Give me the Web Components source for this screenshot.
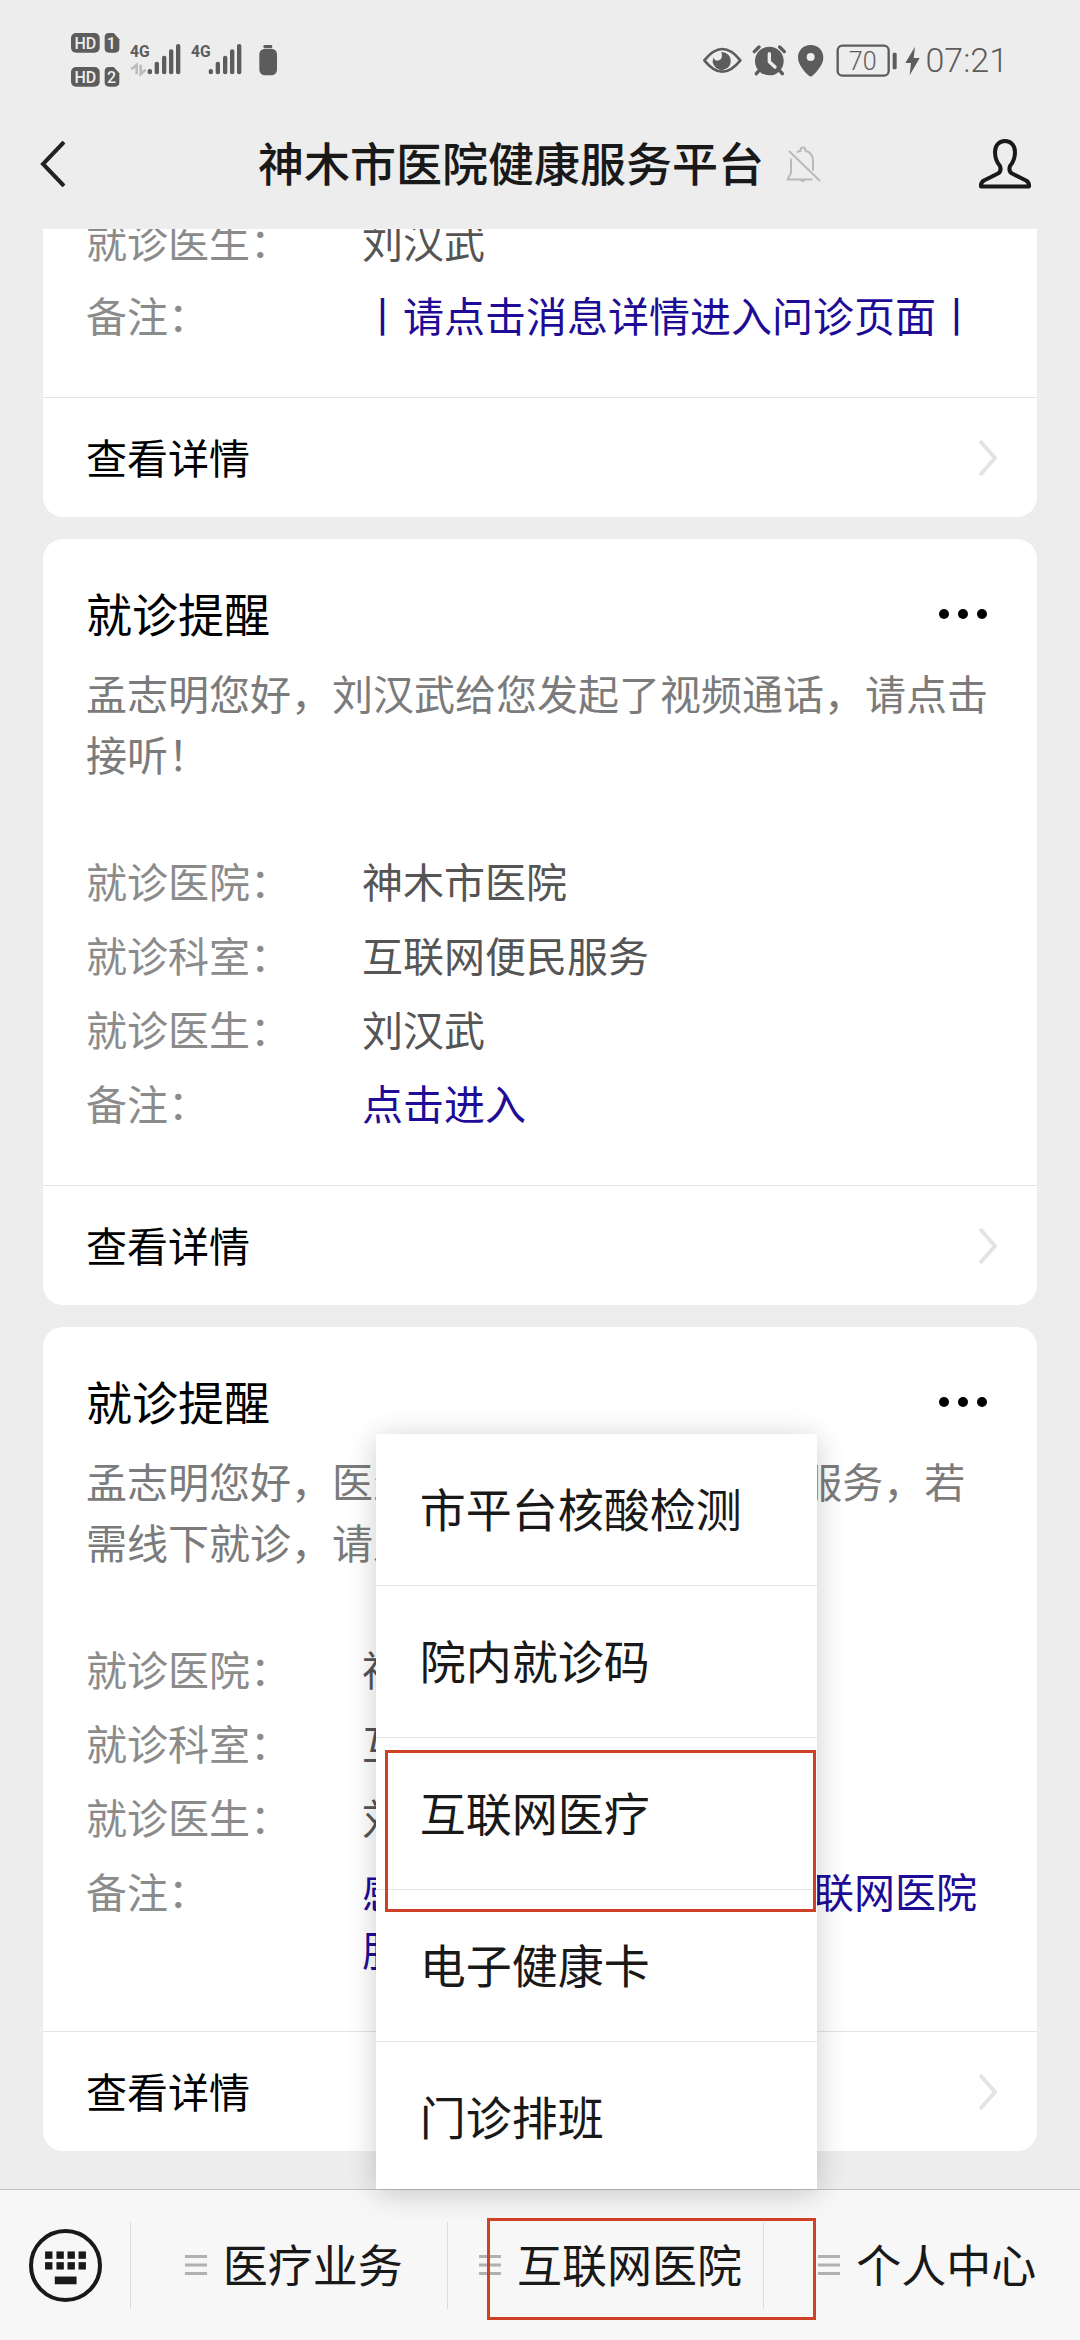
<!DOCTYPE html>
<html lang="zh-CN">
<head>
<meta charset="utf-8">
<meta name="viewport" content="width=device-width, initial-scale=1">
<title>神木市医院健康服务平台</title>
<style>
  html, body { margin: 0; height: 100%; }
  body {
    font-family: "Noto Sans CJK SC", "Noto Sans", sans-serif;
    background: #ededee;
    color: #191919;
  }
</style>
</head>
<body>
<chat-page>
  <status-bar slot="top" time="07:21"></status-bar>
  <nav-bar slot="top">神木市医院健康服务平台</nav-bar>

  <notice-card>
    <info-row label="就诊医生：">刘汉武</info-row>
    <info-row label="备注：" href="#visit">丨请点击消息详情进入问诊页面丨</info-row>
  </notice-card>
  <notice-card heading="就诊提醒">
    <span slot="message">孟志明您好，刘汉武给您发起了视频通话，请点击接听！</span>
    <info-row label="就诊医院：">神木市医院</info-row>
    <info-row label="就诊科室：">互联网便民服务</info-row>
    <info-row label="就诊医生：">刘汉武</info-row>
    <info-row label="备注：" href="#enter">点击进入</info-row>
  </notice-card>
  <notice-card heading="就诊提醒">
    <span slot="message">孟志明您好，医生 刘汉武 已为您开通了服务，若需线下就诊，请及时前往医院。</span>
    <info-row label="就诊医院：">神木市医院</info-row>
    <info-row label="就诊科室：">互联网便民服务</info-row>
    <info-row label="就诊医生：">刘汉武</info-row>
    <info-row label="备注：" href="#thanks">感谢您使用神木市医院互联网医院服务</info-row>
  </notice-card>

  <tool-bar slot="bottom">
    <tool-tab label="医疗业务"></tool-tab>
    <tool-tab label="互联网医院" marked>
      <pop-menu slot="menu">
        <menu-entry>市平台核酸检测</menu-entry>
        <menu-entry>院内就诊码</menu-entry>
        <menu-entry marked>互联网医疗</menu-entry>
        <menu-entry>电子健康卡</menu-entry>
        <menu-entry>门诊排班</menu-entry>
      </pop-menu>
    </tool-tab>
    <tool-tab label="个人中心"></tool-tab>
  </tool-bar>
</chat-page>

<script>
const reset = `
  :host, *, *::before, *::after { box-sizing: border-box; }
  button { margin: 0; padding: 0; border: 0; background: none; font: inherit; color: inherit; text-align: left; cursor: pointer; }
  a { color: inherit; text-decoration: none; }
  svg { display: block; flex: none; }
`;

function define(name, render) {
  customElements.define(name, class extends HTMLElement {
    constructor() {
      super();
      this.attachShadow({ mode: 'open' });
    }
    connectedCallback() {
      const t = document.createElement('template');
      t.innerHTML = `<style>${reset}</style>` + render(this);
      this.shadowRoot.replaceChildren(t.content.cloneNode(true));
    }
  });
}

define('chat-page', () => `
  <style>
    :host { display: flex; flex-direction: column; height: 100vh; overflow: hidden; }
    header { flex: none; position: relative; z-index: 1; background: #ededed; }
    main {
      flex: 1; min-height: 0; overflow: hidden;
      display: flex; flex-direction: column; justify-content: flex-end; gap: 22px;
      padding: 0 43px 38px;
    }
    footer { flex: none; position: relative; z-index: 2; }
  </style>
  <header><slot name="top"></slot></header>
  <main><slot></slot></main>
  <footer><slot name="bottom"></slot></footer>
`);

const signal = (x) => [[0, 176], [21, 154], [43, 136], [64, 117], [85, 101]]
  .map(([dx, y]) => `<rect x="${x + dx}" y="${y}" width="13" height="${192 - y}" rx="6"/>`).join('');

define('status-bar', (el) => `
  <style>
    :host { display: flex; align-items: center; justify-content: space-between; height: 98px; padding: 22px 72px 0 71px; color: #5c5c5c; }
    .right { display: flex; align-items: center; gap: 5px; }
    time { font: 300 34px/40px Roboto, sans-serif; }
    text { font-family: Roboto, sans-serif; }
  </style>
  <svg width="207" height="54" viewBox="93 68 621 162" fill="currentColor" role="img" aria-label="信号">
    <rect x="93" y="68" width="86" height="59" rx="15"/>
    <rect x="93" y="170" width="86" height="59" rx="15"/>
    <path d="M207 68h14l17 19v27q0 13-13 13h-18q-13 0-13-13V81q0-13 13-13z"/>
    <path d="M207 170h14l17 19v27q0 13-13 13h-18q-13 0-13-13v-33q0-13 13-13z"/>
    <g fill="#ededed" font-size="48" font-weight="500" text-anchor="middle">
      <text x="136" y="115">HD</text><text x="136" y="217">HD</text>
      <text x="214" y="115">1</text><text x="215" y="217">2</text>
    </g>
    <g font-size="47" font-weight="700"><text x="270" y="140">4G</text><text x="453" y="140">4G</text></g>
    <path d="M290 192v-28l-16 13M302 163v28l15-13" fill="none" stroke="#bdbdbd" stroke-width="8"/>
    ${signal(323)}${signal(506)}
    <rect x="658" y="115" width="53" height="80" rx="17"/>
    <rect x="670" y="104" width="27" height="9" rx="4"/>
  </svg>
  <div class="right">
    <svg width="217" height="33" viewBox="62 68 651 99" fill="currentColor" role="img" aria-label="电量 70">
      <path d="M66 117q54-68 108 0q-54 68-108 0z" fill="none" stroke="currentColor" stroke-width="8" stroke-linejoin="round"/>
      <path d="M117 92a27 27 0 1 1-24 17q6 12 17 8q13-5 7-25z"/>
      <circle cx="261" cy="119" r="43"/>
      <path d="M216 91l14-14M306 91l-14-14M228 150l-6 7M294 150l6 7" stroke="currentColor" stroke-width="10" stroke-linecap="round"/>
      <path d="M261 97v24l17 16" fill="none" stroke="#ededed" stroke-width="10" stroke-linecap="round" stroke-linejoin="round"/>
      <path fill-rule="evenodd" d="M385 71c22 0 38 16 38 38 0 20-19 41-31 53q-7 7-14 0c-12-12-31-33-31-53 0-22 16-38 38-38zm0 24a12 12 0 1 0 0 24 12 12 0 1 0 0-24z"/>
      <rect x="466" y="73" width="153" height="90" rx="14" fill="none" stroke="currentColor" stroke-width="7"/>
      <text x="541" y="146" font-size="75" font-weight="300" text-anchor="middle">70</text>
      <rect x="631" y="94" width="12" height="50" rx="4"/>
      <path d="M698 76l-29 49h17l-4 37 30-52h-18z"/>
    </svg>
    <time>${el.getAttribute('time')}</time>
  </div>
`);

define('nav-bar', () => `
  <style>
    :host { display: grid; grid-template-columns: 1fr auto 1fr; align-items: center; height: 131px; }
    .back { justify-self: start; padding: 20px 20px 20px 40px; }
    .user { justify-self: end; padding: 20px 49px 20px 20px; }
    .title { display: flex; align-items: center; gap: 22px; }
    h1 { margin: 0; padding-bottom: 6px; font-size: 46px; line-height: 62px; font-weight: 500; white-space: nowrap; }
  </style>
  <button class="back" aria-label="返回">
    <svg width="26" height="46" viewBox="0 0 26 46" fill="none" stroke="#222" stroke-width="4"><path d="M24 1L3 23l21 22"/></svg>
  </button>
  <div class="title">
    <h1><slot></slot></h1>
    <svg width="36" height="36" viewBox="0 0 36 36" fill="none" stroke="#b9b9b9" stroke-width="2">
      <path d="M11 6.500q2-1.500 3.500-1.700Q14.500 1.500 17 1.500T19.500 4.800Q27 7 27 15v9.500M5.500 12.500Q5 14 5 16v11l-3.500 6.500H26.500M14 33.500q3 3 5 0M3 5l31 30"/>
    </svg>
  </div>
  <button class="user" aria-label="个人资料">
    <svg width="52" height="50" viewBox="0 0 52 50" fill="none" stroke="#191919" stroke-width="4" stroke-linejoin="round">
      <path d="M26 2c-6.500 0-10 5-10 11 0 6 1.500 10 5 14q2 6-3 8L5 41.500q-3.500 2-3 6h48q.5-4-3-6L34 35q-5-2-3-8c3.500-4 5-8 5-14 0-6-3.500-11-10-11z"/>
    </svg>
  </button>
`);

define('notice-card', (el) => {
  const heading = el.getAttribute('heading');
  return `
  <style>
    :host { display: block; flex: none; background: #fff; border-radius: 20px; color: #000; }
    .body { padding: 42px 46px 54px 43px; }
    .head { display: flex; justify-content: space-between; align-items: center; }
    .head button { padding: 24px 4px 20px 20px; margin: -20px 0; }
    h2 { margin: 0; font-size: 46px; line-height: 62px; font-weight: 400; }
    p { margin: 19px 0 67px; font-size: 41px; line-height: 61px; color: #7b7b7b; }
    .rows { display: flex; flex-direction: column; gap: 16px; }
    .more {
      display: flex; justify-content: space-between; align-items: center;
      height: 120px; padding: 0 40px 0 43px; border-top: 1px solid #e4e4e4;
      font-size: 41px; line-height: 58px;
    }
    .more span { padding-bottom: 4px; }
  </style>
  <div class="body">
    ${heading ? `<div class="head">
      <h2>${heading}</h2>
      <button aria-label="更多">
        <svg width="48" height="10" viewBox="0 0 48 10"><circle cx="5" cy="5" r="5"/><circle cx="24" cy="5" r="5"/><circle cx="43" cy="5" r="5"/></svg>
      </button>
    </div>
    <p><slot name="message"></slot></p>` : ''}
    <div class="rows"><slot></slot></div>
  </div>
  <a class="more" href="#detail"><span>查看详情</span>
    <svg width="19" height="36" viewBox="0 0 19 36" fill="none" stroke="#e4e4e7" stroke-width="4"><path d="M2 1l15 17L2 35"/></svg>
  </a>`;
});

define('info-row', (el) => {
  const href = el.getAttribute('href');
  return `
  <style>
    :host { display: flex; font-size: 41px; line-height: 58px; }
    .label { flex: none; width: 276px; color: #8b8b8b; }
    .value { flex: 1; min-width: 0; color: #555; }
    a { color: #1e0c96; }
  </style>
  <span class="label">${el.getAttribute('label')}</span>
  <span class="value">${href ? `<a href="${href}"><slot></slot></a>` : '<slot></slot>'}</span>`;
});

const keys = [136, 170, 203, 236]
  .map((x) => `<rect x="${x}" y="244" width="22" height="22"/><rect x="${x}" y="276" width="22" height="22"/>`).join('');

define('tool-bar', () => `
  <style>
    :host { display: flex; height: 151px; background: #f7f7f8; border-top: 1px solid #c2c2c3; }
    button { flex: none; width: 130px; padding-left: 29px; display: flex; align-items: center; }
    nav { flex: 1; display: flex; }
  </style>
  <button aria-label="切换键盘">
    <svg width="73" height="73" viewBox="88 177 218 218" fill="#191919">
      <circle cx="197" cy="286" r="103" fill="none" stroke="#191919" stroke-width="12"/>
      ${keys}<rect x="165" y="319" width="65" height="23"/>
    </svg>
  </button>
  <nav><slot></slot></nav>
`);

define('tool-tab', (el) => `
  <style>
    :host { display: flex; align-items: center; flex: 1; position: relative; }
    :host::before { content: ""; width: 1px; height: 87px; background: #dcdcdd; }
    button {
      flex: 1; align-self: stretch; padding-left: 10px;
      display: flex; align-items: center; justify-content: center; gap: 16px;
      font-size: 45px; line-height: 62px; white-space: nowrap;
    }
    span { padding-bottom: 2px; }
    /* highlight frame, lies over the tab and its icon */
    :host([marked])::after {
      content: ""; position: absolute; inset: 28px -53px 20px 40px;
      border: 3px solid #cf4125; pointer-events: none; z-index: 1;
    }
  </style>
  <button>
    <svg width="22" height="20" viewBox="0 0 22 20" fill="#b1b1b1"><path d="M0 0h22v3H0zM0 8.500h22v3H0zM0 17h22v3H0z"/></svg>
    <span>${el.getAttribute('label')}</span>
  </button>
  <slot name="menu"></slot>
`);

define('pop-menu', () => `
  <style>
    :host {
      display: flex; flex-direction: column;
      position: absolute; left: -71px; bottom: calc(100% + 1px); width: 441px;
      background: #fff; box-shadow: 0 4px 28px rgba(0, 0, 0, .2);
    }
  </style>
  <slot></slot>
`);

define('menu-entry', () => `
  <style>
    :host { display: block; position: relative; border-bottom: 1px solid #e5e5e5; }
    :host(:last-child) { height: 147px; border-bottom: 0; }
    button { display: block; width: 100%; height: 151px; padding: 0 44px 6px; font-size: 46px; line-height: 62px; white-space: nowrap; }
    :host([marked])::after {
      content: ""; position: absolute; inset: 12px 1px -23px 9px;
      border: 3px solid #cf4125; pointer-events: none; z-index: 1;
    }
  </style>
  <button><slot></slot></button>
`);
</script>
</body>
</html>
